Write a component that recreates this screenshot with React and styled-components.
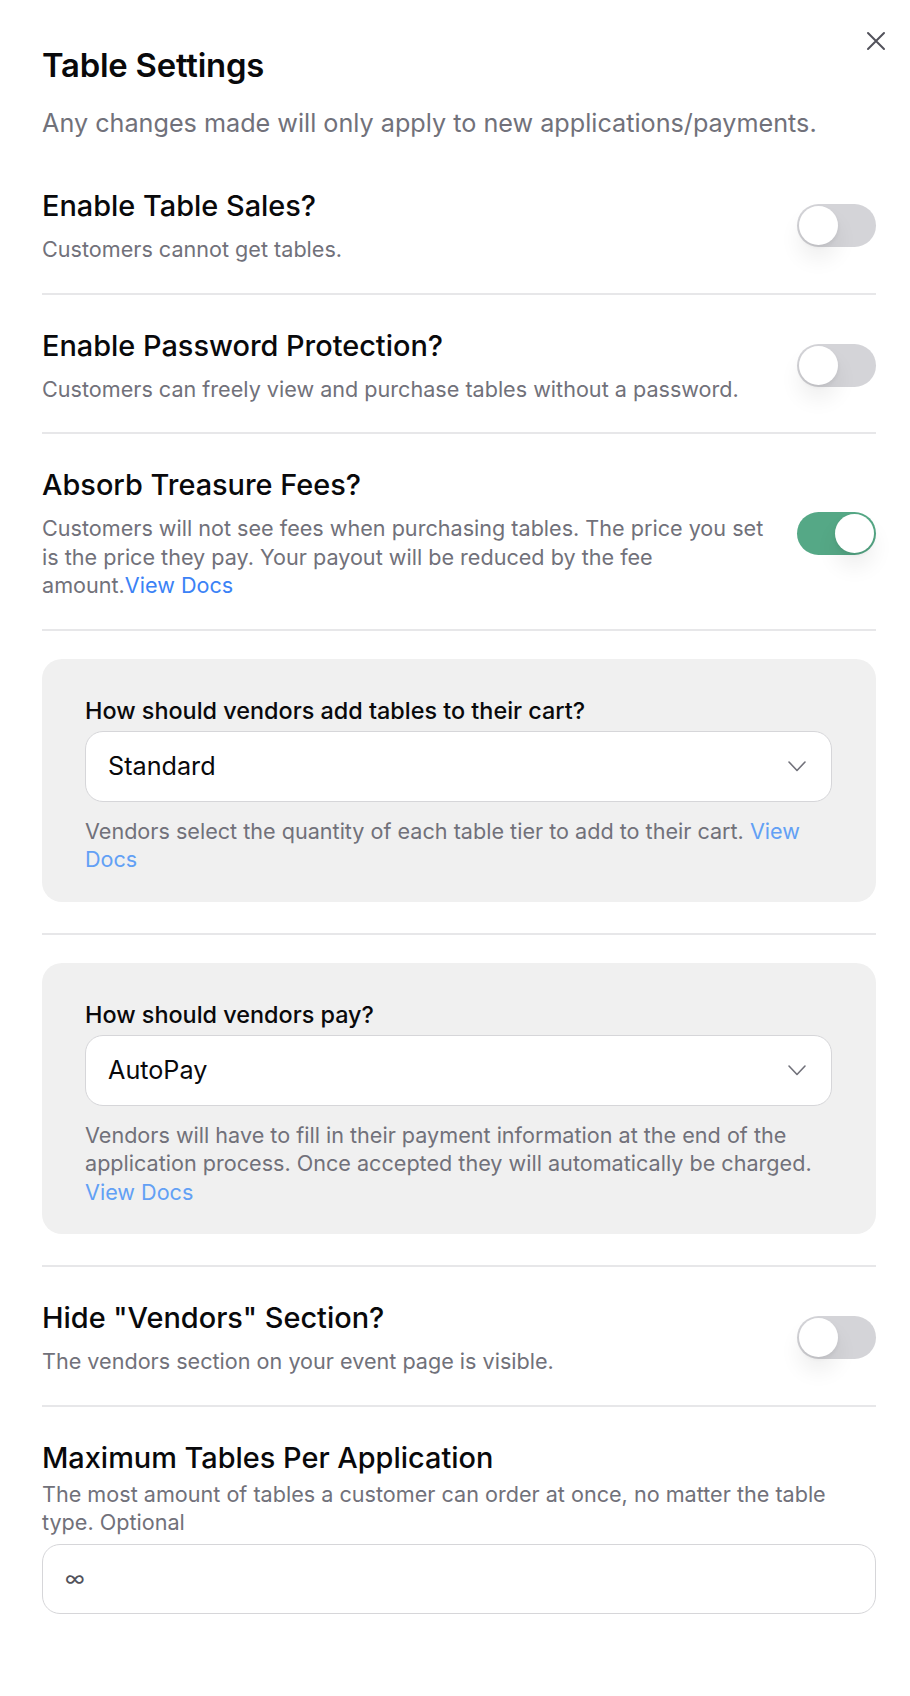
import styled, { createGlobalStyle } from "styled-components"

const GlobalStyle = createGlobalStyle`
  body {
    margin: 0;
    background: #ffffff;
    font-family: Inter, "Noto Sans", sans-serif;
    color: #09090b;
  }
`

const Panel = styled.div`
  position: relative;
  padding: 45px 34px 80px 42px;
`

const CloseButton = styled.button`
  position: absolute;
  top: 29px;
  right: 22px;
  width: 24px;
  height: 24px;
  padding: 0;
  border: none;
  background: none;
  color: #52525b;
  display: flex;
  align-items: center;
  justify-content: center;
  cursor: pointer;
`

const Title = styled.h1`
  margin: 0;
  font-size: 32.8px;
  line-height: 40px;
  font-weight: 600;
  letter-spacing: -0.2px;
`

const Subtitle = styled.p`
  margin: 22px 0 19px;
  font-size: 25.2px;
  line-height: 32px;
  color: #71717a;
`

const Section = styled.div`
  padding: ${p => p.$box ? "28px 0 31px" : "33px 0 29px"};
  border-bottom: 2px solid #e7e7e9;
  &:first-of-type {
    padding-top: 30px;
  }
  &:last-child {
    border-bottom: none;
  }
`

const Row = styled.div`
  display: flex;
  align-items: center;
  gap: 28px;
`

const TextCol = styled.div`
  flex: 1;
  min-width: 0;
`

const Heading = styled.h2`
  margin: 0;
  font-size: 28.9px;
  line-height: 36px;
  font-weight: 500;
`

const Desc = styled.p`
  margin: ${p => p.$tight ? "4px" : "11px"} 0 0;
  font-size: 21.6px;
  line-height: 28.5px;
  color: #71717a;
`

const DocsLink = styled.a`
  color: ${p => p.$light ? "#62a0f5" : "#3b82f6"};
  text-decoration: none;
`

const Track = styled.div`
  flex-shrink: 0;
  width: 79px;
  height: 43px;
  border-radius: 999px;
  padding: 2px;
  box-sizing: border-box;
  background: ${p => p.$on ? "#55a886" : "#d4d4d8"};
  display: flex;
  justify-content: ${p => p.$on ? "flex-end" : "flex-start"};
`

const Knob = styled.div`
  width: 39px;
  height: 39px;
  border-radius: 50%;
  background: #ffffff;
  box-shadow: 0 14px 22px rgba(0, 0, 0, 0.07), 0 2px 4px rgba(0, 0, 0, 0.06);
`

const Box = styled.div`
  background: #f0f0f0;
  border-radius: 20px;
  padding: 37px 44px 28px 43px;
`

const Label = styled.div`
  font-size: 23.4px;
  line-height: 30px;
  font-weight: 500;
  margin-bottom: 5px;
`

const Select = styled.div`
  height: 71px;
  box-sizing: border-box;
  background: #ffffff;
  border: 1px solid #d6d6d9;
  border-radius: 18px;
  padding: 0 22px 0 22px;
  display: flex;
  align-items: center;
  justify-content: space-between;
  font-size: 25.2px;
  color: #09090b;
`

const Helper = styled.p`
  margin: 15px 0 0;
  font-size: 21.6px;
  line-height: 28.5px;
  color: #71717a;
`

const Input = styled.div`
  margin-top: 7px;
  height: 70px;
  box-sizing: border-box;
  border: 1px solid #d6d6d9;
  border-radius: 18px;
  padding: 0 22px;
  display: flex;
  align-items: center;
  font-size: 21px;
  color: #52525b;
`

function Toggle({ on }) {
  return (
    <Track $on={on}>
      <Knob />
    </Track>
  )
}

function Chevron() {
  return (
    <svg width="24" height="24" viewBox="0 0 24 24" fill="none" stroke="#71717a" strokeWidth="1.6" strokeLinecap="round" strokeLinejoin="round">
      <path d="M4 8l8 8.5 8-8.5" />
    </svg>
  )
}

function ToggleSection({ title, on, children }) {
  return (
    <Section>
      <Row>
        <TextCol>
          <Heading>{title}</Heading>
          <Desc>{children}</Desc>
        </TextCol>
        <Toggle on={on} />
      </Row>
    </Section>
  )
}

function SelectSection({ label, value, children }) {
  return (
    <Section $box>
      <Box>
        <Label>{label}</Label>
        <Select>
          <span>{value}</span>
          <Chevron />
        </Select>
        <Helper>{children}</Helper>
      </Box>
    </Section>
  )
}

export default function App() {
  return (
    <>
      <GlobalStyle />
      <Panel>
        <CloseButton aria-label="Close">
          <svg width="24" height="24" viewBox="0 0 24 24" fill="none" stroke="currentColor" strokeWidth="2" strokeLinecap="round">
            <path d="M4 4l16 16M20 4L4 20" />
          </svg>
        </CloseButton>
        <Title>Table Settings</Title>
        <Subtitle>Any changes made will only apply to new applications/payments.</Subtitle>

        <ToggleSection title="Enable Table Sales?" on={false}>
          Customers cannot get tables.
        </ToggleSection>

        <ToggleSection title="Enable Password Protection?" on={false}>
          Customers can freely view and purchase tables without a password.
        </ToggleSection>

        <ToggleSection title="Absorb Treasure Fees?" on={true}>
          Customers will not see fees when purchasing tables. The price you set is the price they pay. Your payout will be reduced by the fee amount.
          <DocsLink href="#">View Docs</DocsLink>
        </ToggleSection>

        <SelectSection label="How should vendors add tables to their cart?" value="Standard">
          Vendors select the quantity of each table tier to add to their cart.{" "}
          <DocsLink $light href="#">View Docs</DocsLink>
        </SelectSection>

        <SelectSection label="How should vendors pay?" value="AutoPay">
          Vendors will have to fill in their payment information at the end of the application process. Once accepted they will automatically be charged.{" "}
          <DocsLink $light href="#">View Docs</DocsLink>
        </SelectSection>

        <ToggleSection title={'Hide "Vendors" Section?'} on={false}>
          The vendors section on your event page is visible.
        </ToggleSection>

        <Section>
          <Heading>Maximum Tables Per Application</Heading>
          <Desc $tight>
            The most amount of tables a customer can order at once, no matter the table type. Optional
          </Desc>
          <Input>∞</Input>
        </Section>
      </Panel>
    </>
  )
}
